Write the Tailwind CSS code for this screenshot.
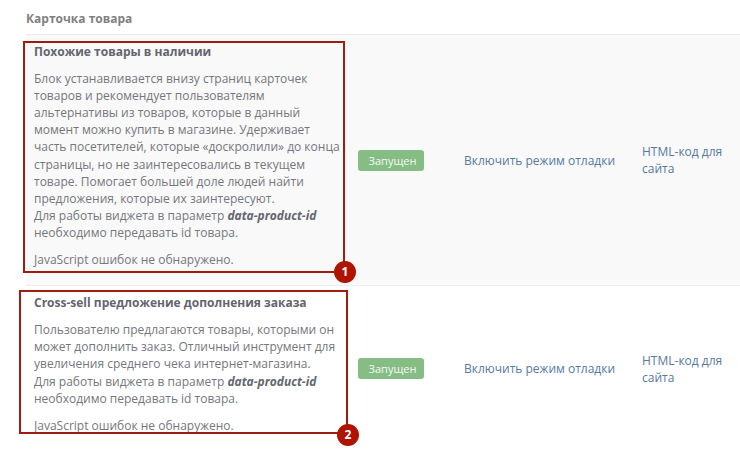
<!DOCTYPE html>
<html lang="ru">
<head>
    <meta charset="UTF-8">
    <title>Карточка товара</title>
    <script src="https://cdn.jsdelivr.net/npm/@tailwindcss/browser@4"></script>
</head>
<body class="relative w-[740px] h-[450px] overflow-hidden bg-white font-['Open_Sans',sans-serif] text-[12px] leading-[17.1px] text-[#74777c]">
    <!-- Заголовок таблицы -->
    <div class="ml-[26px] h-[35px] pt-[10px] font-bold text-[#808080] border-b border-[#e9edf1]">Карточка товара</div>

    <!-- Строка 1 -->
    <div class="ml-[26px] grid grid-cols-[324px_106px_178px_106px] items-center bg-[#f9f9f9] border-b border-[#eeeeee]">
        <div class="px-2 pt-2 pb-[7px]">
            <h3 class="mb-[10px] font-bold text-[#62666e]">Похожие товары в наличии</h3>
            <p class="mb-[10px]">Блок устанавливается внизу страниц карточек товаров и рекомендует пользователям альтернативы из товаров, которые в данный момент можно купить в магазине. Удерживает часть посетителей, которые «доскролили» до конца страницы, но не заинтересовались в текущем товаре. Помогает большей доле людей найти предложения, которые их заинтересуют.<br>Для работы виджета в параметр <b class="italic text-[#62666e]">data-product-id</b> необходимо передавать id товара.</p>
            <p class="mb-[10px]">JavaScript ошибок не обнаружено.</p>
        </div>
        <div class="p-2"><span class="block w-[66px] h-[21px] pl-[3px] rounded-[3px] bg-[#85bd85] text-center text-[11px] leading-[21px] text-white/90">Запущен</span></div>
        <div class="p-2 text-[#557aa0]">Включить режим отладки</div>
        <div class="p-2 text-[#557aa0]">HTML-код для сайта</div>
    </div>

    <!-- Строка 2 -->
    <div class="ml-[26px] grid grid-cols-[324px_106px_178px_106px] items-center">
        <div class="p-2">
            <h3 class="mb-[10px] font-bold text-[#62666e]">Cross-sell предложение дополнения заказа</h3>
            <p class="mb-[10px]">Пользователю предлагаются товары, которыми он может дополнить заказ. Отличный инструмент для увеличения среднего чека интернет-магазина.<br>Для работы виджета в параметр <b class="italic text-[#62666e]">data-product-id</b> необходимо передавать id товара.</p>
            <p class="mb-[10px]">JavaScript ошибок не обнаружено.</p>
        </div>
        <div class="p-2"><span class="block w-[66px] h-[21px] pl-[3px] rounded-[3px] bg-[#85bd85] text-center text-[11px] leading-[21px] text-white/90">Запущен</span></div>
        <div class="p-2 text-[#557aa0]">Включить режим отладки</div>
        <div class="p-2 text-[#557aa0]">HTML-код для сайта</div>
    </div>

    <!-- Красные рамки и номера поверх скриншота -->
    <div class="absolute left-[23px] top-[41px] w-[322px] h-[232px] border-2 border-[#a01c10]"></div>
    <div class="absolute left-[334px] top-[261px] w-[22px] h-[22px] rounded-full bg-[#ae1400] text-center text-[12px] leading-[22px] font-bold text-white">1</div>
    <div class="absolute left-[19px] top-[290px] w-[329px] h-[144px] border-2 border-[#a01c10]"></div>
    <div class="absolute left-[337px] top-[424px] w-[22px] h-[22px] rounded-full bg-[#ae1400] text-center text-[12px] leading-[22px] font-bold text-white">2</div>
</body>
</html>
